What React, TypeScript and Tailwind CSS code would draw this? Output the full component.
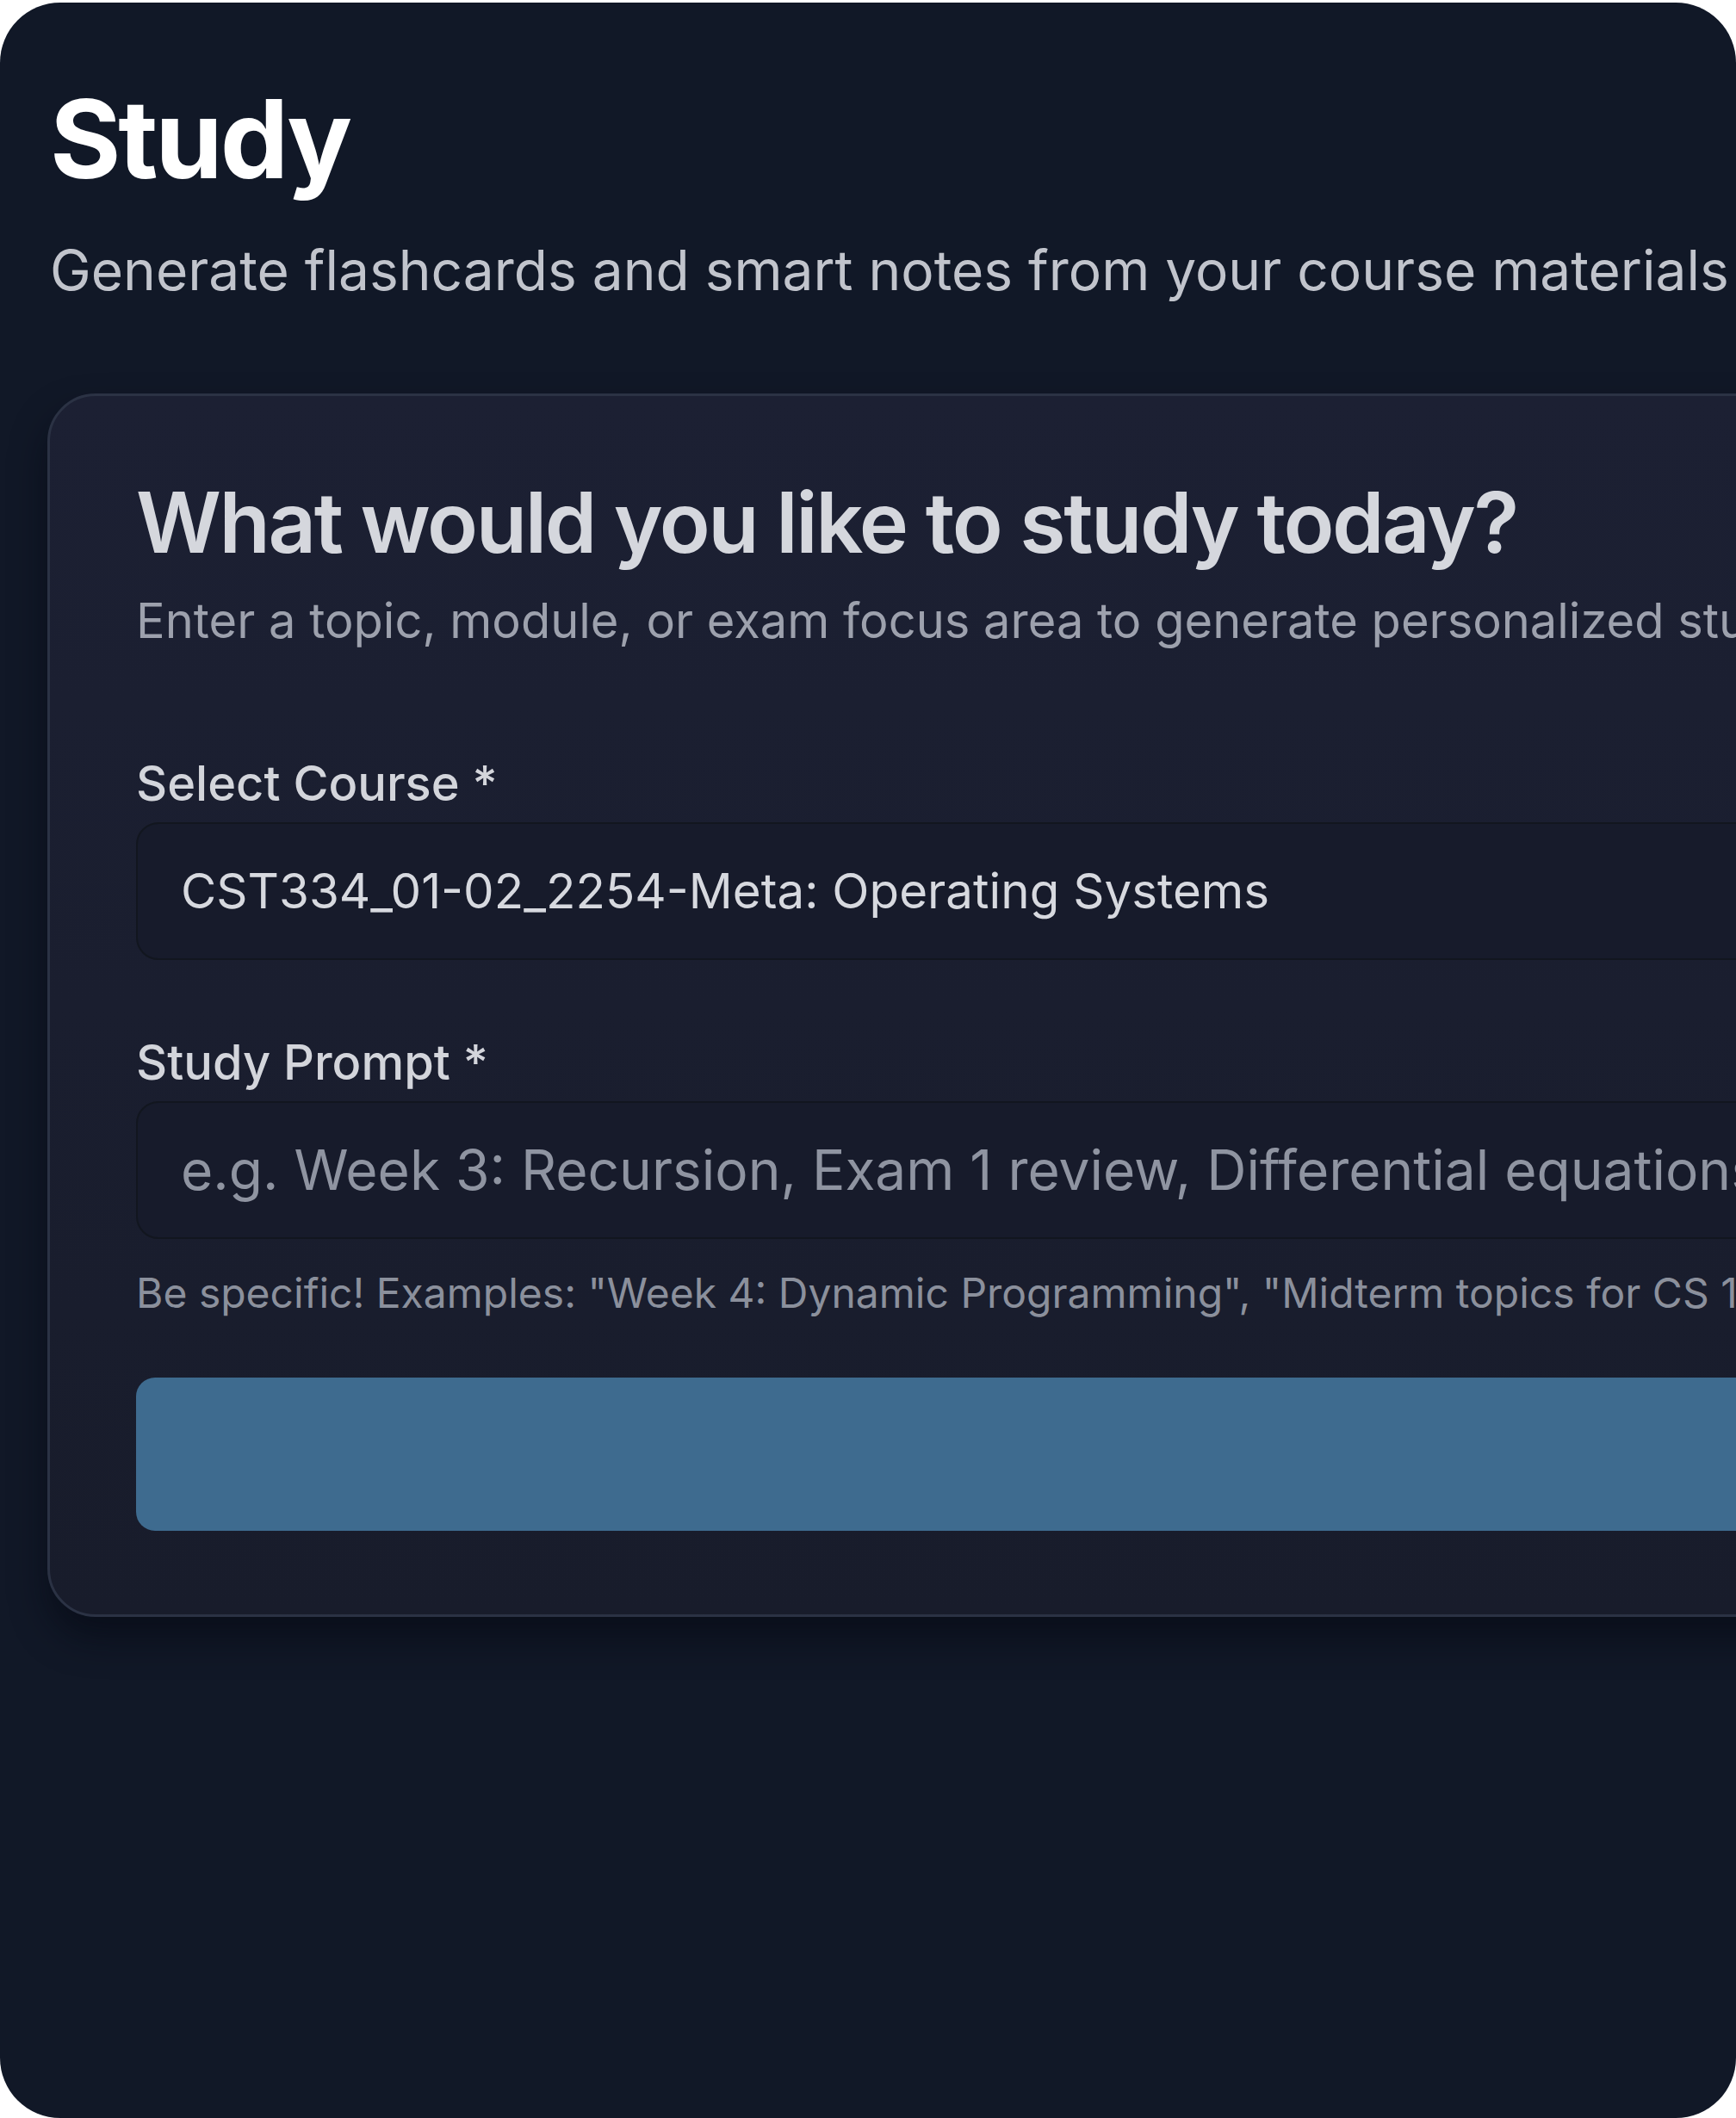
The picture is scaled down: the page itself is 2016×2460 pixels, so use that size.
import React from "react";

export default function App() {
    return (
        <div className="min-h-screen bg-white pt-[3px]">
            <div className="h-[2457px] w-[2016px] overflow-hidden rounded-[70px] bg-[#111827] font-['Inter',sans-serif]">
                <div className="w-[2700px] pl-[58px] pt-[95px]">
                    <h1 className="text-[126px] font-bold leading-none tracking-tight text-white">
                        Study
                    </h1>
                    <p className="mt-[44px] text-[64px] leading-[92px] text-[#c1c4cc]">
                        Generate flashcards and smart notes from your course materials
                    </p>
                </div>

                <div className="ml-[55px] mt-[97px] w-[2600px] rounded-[56px] border-[3px] border-[#2b3244] bg-gradient-to-b from-[#1c2033] to-[#181c2b] px-[100px] pb-[97px] pt-[98px] shadow-[0_24px_40px_rgba(5,8,18,0.6)]">
                    <h2 className="text-[97px] font-semibold leading-none tracking-tight text-[#d5d7dd]">
                        What would you like to study today?
                    </h2>
                    <p className="mt-[26px] text-[56px] leading-[80px] text-[#9da1ad]">
                        Enter a topic, module, or exam focus area to generate personalized study materials
                    </p>

                    <div className="mt-[107px]">
                        <label className="block text-[56px] font-medium leading-[84px] text-[#d3d5db]">
                            Select Course *
                        </label>
                        <div className="mt-[3px] flex h-[160px] items-center rounded-[26px] border-2 border-[#12161f] bg-[#171b2b] px-[50px]">
                            <span className="text-[56.5px] text-[#d7d9df]">
                                CST334_01-02_2254-Meta: Operating Systems
                            </span>
                        </div>
                    </div>

                    <div className="mt-[77px]">
                        <label className="block text-[56px] font-medium leading-[84px] text-[#d3d5db]">
                            Study Prompt *
                        </label>
                        <div className="mt-[3px] flex h-[160px] items-center rounded-[26px] border-2 border-[#12161f] bg-[#171b2b] px-[50px]">
                            <span className="text-[64px] text-[#8f94a1]">
                                e.g. Week 3: Recursion, Exam 1 review, Differential equations
                            </span>
                        </div>
                        <p className="mt-[27px] text-[48px] leading-[72px] text-[#8b909c]">
                            Be specific! Examples: "Week 4: Dynamic Programming", "Midterm topics for CS 101"
                        </p>
                    </div>

                    <div className="mt-[62px] h-[178px] rounded-[22px] bg-[#3e6b8f]" />
                </div>
            </div>
        </div>
    );
}
